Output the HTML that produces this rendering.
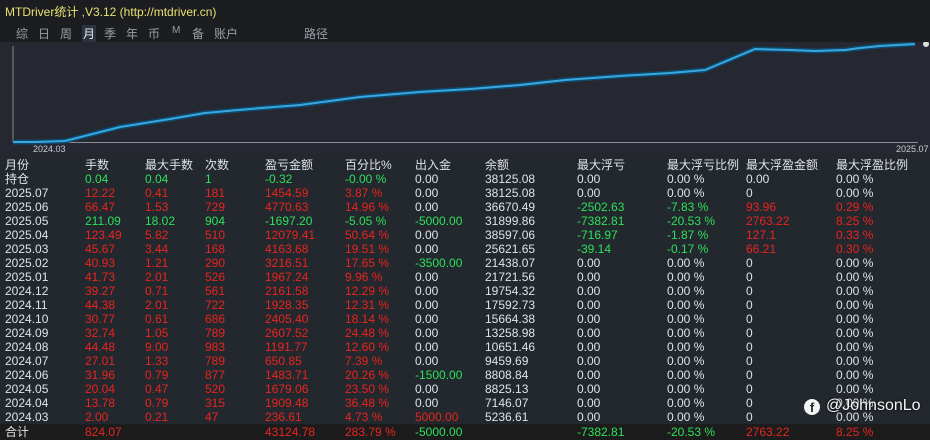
<!DOCTYPE html>
<html><head><meta charset="utf-8"><style>
*{margin:0;padding:0;box-sizing:border-box}
body{width:930px;height:438px;overflow:hidden;background:#23272e;font-family:"Liberation Sans","Noto Sans CJK SC",sans-serif;color:#dfe3ea;position:relative}
.top{position:absolute;left:0;top:0;width:930px;height:42px;background:#1b1d20}
.title{position:absolute;left:5px;top:3px;font-size:12px;color:#e8e070}
.tabs{position:absolute;left:16px;top:25px;font-size:12px;color:#9a9ea6}
.tabs span{position:absolute;top:0;white-space:nowrap}
.chart{position:absolute;left:0;top:42px;width:930px;height:112px;background:#252830}
.ax{position:absolute;font-size:9px;color:#c8ccd2}
.row{position:absolute;left:0;width:930px;height:14px;font-size:12px;line-height:14px;white-space:nowrap}
.row span{position:absolute;top:0}
.r{color:#e8251e}.g{color:#2ee05a}.w{color:#dfe3ea}
.tot{background:#1c1c1d;height:16px}
</style></head><body>
<div class="top">
<div class="title">MTDriver统计 ,V3.12 (http://mtdriver.cn)</div>
<div class="tabs">
<span style="left:0">综</span><span style="left:22px">日</span><span style="left:44px">周</span><span style="left:66px;color:#e6e9ee;background:#2c3340;padding:0 1px">月</span><span style="left:88px">季</span><span style="left:110px">年</span><span style="left:132px">币</span><span style="left:156px;font-size:10px">M</span><span style="left:176px">备</span><span style="left:198px">账户</span><span style="left:288px">路径</span>
</div>
</div>
<div class="chart">
<svg width="930" height="112" style="position:absolute;left:0;top:0">
<line x1="13" y1="4" x2="13" y2="100" stroke="#888" stroke-width="1"/>
<line x1="13" y1="100.5" x2="918" y2="100.5" stroke="#8a8e94" stroke-width="1"/>
<polyline fill="none" stroke="#0e4a6e" stroke-width="5" points="13,100 35,100 65,99 120,85 170,77 205,71 250,67 300,63 360,55 420,50 470,47 520,43 565,38 620,34 670,31 705,28 755,7 790,8 815,9 845,8 860,6 880,4 915,2"/>
<polyline fill="none" stroke="#3aa8e0" stroke-width="2" points="13,100 35,100 65,99 120,85 170,77 205,71 250,67 300,63 360,55 420,50 470,47 520,43 565,38 620,34 670,31 705,28 755,7 790,8 815,9 845,8 860,6 880,4 915,2"/>
<circle cx="926" cy="2" r="3" fill="#ddd"/>
</svg>
<div class="ax" style="left:33px;top:102px">2024.03</div>
<div class="ax" style="left:896px;top:102px">2025.07</div>
</div>

<div class="row w" style="top:158px"><span style="left:5px">月份</span><span style="left:85px">手数</span><span style="left:145px">最大手数</span><span style="left:205px">次数</span><span style="left:265px">盈亏金额</span><span style="left:345px">百分比%</span><span style="left:415px">出入金</span><span style="left:485px">余额</span><span style="left:577px">最大浮亏</span><span style="left:667px">最大浮亏比例</span><span style="left:746px">最大浮盈金额</span><span style="left:836px">最大浮盈比例</span></div>
<div class="row" style="top:172px"><span class="w" style="left:5px">持仓</span><span class="g" style="left:85px">0.04</span><span class="g" style="left:145px">0.04</span><span class="g" style="left:205px">1</span><span class="g" style="left:265px">-0.32</span><span class="g" style="left:345px">-0.00 %</span><span class="w" style="left:415px">0.00</span><span class="w" style="left:485px">38125.08</span><span class="w" style="left:577px">0.00</span><span class="w" style="left:667px">0.00 %</span><span class="w" style="left:746px">0.00</span><span class="w" style="left:836px">0.00 %</span></div>
<div class="row" style="top:186px"><span class="w" style="left:5px">2025.07</span><span class="r" style="left:85px">12.22</span><span class="r" style="left:145px">0.41</span><span class="r" style="left:205px">181</span><span class="r" style="left:265px">1454.59</span><span class="r" style="left:345px">3.87 %</span><span class="w" style="left:415px">0.00</span><span class="w" style="left:485px">38125.08</span><span class="w" style="left:577px">0.00</span><span class="w" style="left:667px">0.00 %</span><span class="w" style="left:746px">0</span><span class="w" style="left:836px">0.00 %</span></div>
<div class="row" style="top:200px"><span class="w" style="left:5px">2025.06</span><span class="r" style="left:85px">66.47</span><span class="r" style="left:145px">1.53</span><span class="r" style="left:205px">729</span><span class="r" style="left:265px">4770.63</span><span class="r" style="left:345px">14.96 %</span><span class="w" style="left:415px">0.00</span><span class="w" style="left:485px">36670.49</span><span class="g" style="left:577px">-2502.63</span><span class="g" style="left:667px">-7.83 %</span><span class="r" style="left:746px">93.96</span><span class="r" style="left:836px">0.29 %</span></div>
<div class="row" style="top:214px"><span class="w" style="left:5px">2025.05</span><span class="g" style="left:85px">211.09</span><span class="g" style="left:145px">18.02</span><span class="g" style="left:205px">904</span><span class="g" style="left:265px">-1697.20</span><span class="g" style="left:345px">-5.05 %</span><span class="g" style="left:415px">-5000.00</span><span class="w" style="left:485px">31899.86</span><span class="g" style="left:577px">-7382.81</span><span class="g" style="left:667px">-20.53 %</span><span class="r" style="left:746px">2763.22</span><span class="r" style="left:836px">8.25 %</span></div>
<div class="row" style="top:228px"><span class="w" style="left:5px">2025.04</span><span class="r" style="left:85px">123.49</span><span class="r" style="left:145px">5.82</span><span class="r" style="left:205px">510</span><span class="r" style="left:265px">12079.41</span><span class="r" style="left:345px">50.64 %</span><span class="w" style="left:415px">0.00</span><span class="w" style="left:485px">38597.06</span><span class="g" style="left:577px">-716.97</span><span class="g" style="left:667px">-1.87 %</span><span class="r" style="left:746px">127.1</span><span class="r" style="left:836px">0.33 %</span></div>
<div class="row" style="top:242px"><span class="w" style="left:5px">2025.03</span><span class="r" style="left:85px">45.67</span><span class="r" style="left:145px">3.44</span><span class="r" style="left:205px">168</span><span class="r" style="left:265px">4163.68</span><span class="r" style="left:345px">19.51 %</span><span class="w" style="left:415px">0.00</span><span class="w" style="left:485px">25621.65</span><span class="g" style="left:577px">-39.14</span><span class="g" style="left:667px">-0.17 %</span><span class="r" style="left:746px">66.21</span><span class="r" style="left:836px">0.30 %</span></div>
<div class="row" style="top:256px"><span class="w" style="left:5px">2025.02</span><span class="r" style="left:85px">40.93</span><span class="r" style="left:145px">1.21</span><span class="r" style="left:205px">290</span><span class="r" style="left:265px">3216.51</span><span class="r" style="left:345px">17.65 %</span><span class="g" style="left:415px">-3500.00</span><span class="w" style="left:485px">21438.07</span><span class="w" style="left:577px">0.00</span><span class="w" style="left:667px">0.00 %</span><span class="w" style="left:746px">0</span><span class="w" style="left:836px">0.00 %</span></div>
<div class="row" style="top:270px"><span class="w" style="left:5px">2025.01</span><span class="r" style="left:85px">41.73</span><span class="r" style="left:145px">2.01</span><span class="r" style="left:205px">526</span><span class="r" style="left:265px">1967.24</span><span class="r" style="left:345px">9.96 %</span><span class="w" style="left:415px">0.00</span><span class="w" style="left:485px">21721.56</span><span class="w" style="left:577px">0.00</span><span class="w" style="left:667px">0.00 %</span><span class="w" style="left:746px">0</span><span class="w" style="left:836px">0.00 %</span></div>
<div class="row" style="top:284px"><span class="w" style="left:5px">2024.12</span><span class="r" style="left:85px">39.27</span><span class="r" style="left:145px">0.71</span><span class="r" style="left:205px">561</span><span class="r" style="left:265px">2161.58</span><span class="r" style="left:345px">12.29 %</span><span class="w" style="left:415px">0.00</span><span class="w" style="left:485px">19754.32</span><span class="w" style="left:577px">0.00</span><span class="w" style="left:667px">0.00 %</span><span class="w" style="left:746px">0</span><span class="w" style="left:836px">0.00 %</span></div>
<div class="row" style="top:298px"><span class="w" style="left:5px">2024.11</span><span class="r" style="left:85px">44.38</span><span class="r" style="left:145px">2.01</span><span class="r" style="left:205px">722</span><span class="r" style="left:265px">1928.35</span><span class="r" style="left:345px">12.31 %</span><span class="w" style="left:415px">0.00</span><span class="w" style="left:485px">17592.73</span><span class="w" style="left:577px">0.00</span><span class="w" style="left:667px">0.00 %</span><span class="w" style="left:746px">0</span><span class="w" style="left:836px">0.00 %</span></div>
<div class="row" style="top:312px"><span class="w" style="left:5px">2024.10</span><span class="r" style="left:85px">30.77</span><span class="r" style="left:145px">0.61</span><span class="r" style="left:205px">686</span><span class="r" style="left:265px">2405.40</span><span class="r" style="left:345px">18.14 %</span><span class="w" style="left:415px">0.00</span><span class="w" style="left:485px">15664.38</span><span class="w" style="left:577px">0.00</span><span class="w" style="left:667px">0.00 %</span><span class="w" style="left:746px">0</span><span class="w" style="left:836px">0.00 %</span></div>
<div class="row" style="top:326px"><span class="w" style="left:5px">2024.09</span><span class="r" style="left:85px">32.74</span><span class="r" style="left:145px">1.05</span><span class="r" style="left:205px">789</span><span class="r" style="left:265px">2607.52</span><span class="r" style="left:345px">24.48 %</span><span class="w" style="left:415px">0.00</span><span class="w" style="left:485px">13258.98</span><span class="w" style="left:577px">0.00</span><span class="w" style="left:667px">0.00 %</span><span class="w" style="left:746px">0</span><span class="w" style="left:836px">0.00 %</span></div>
<div class="row" style="top:340px"><span class="w" style="left:5px">2024.08</span><span class="r" style="left:85px">44.48</span><span class="r" style="left:145px">9.00</span><span class="r" style="left:205px">983</span><span class="r" style="left:265px">1191.77</span><span class="r" style="left:345px">12.60 %</span><span class="w" style="left:415px">0.00</span><span class="w" style="left:485px">10651.46</span><span class="w" style="left:577px">0.00</span><span class="w" style="left:667px">0.00 %</span><span class="w" style="left:746px">0</span><span class="w" style="left:836px">0.00 %</span></div>
<div class="row" style="top:354px"><span class="w" style="left:5px">2024.07</span><span class="r" style="left:85px">27.01</span><span class="r" style="left:145px">1.33</span><span class="r" style="left:205px">789</span><span class="r" style="left:265px">650.85</span><span class="r" style="left:345px">7.39 %</span><span class="w" style="left:415px">0.00</span><span class="w" style="left:485px">9459.69</span><span class="w" style="left:577px">0.00</span><span class="w" style="left:667px">0.00 %</span><span class="w" style="left:746px">0</span><span class="w" style="left:836px">0.00 %</span></div>
<div class="row" style="top:368px"><span class="w" style="left:5px">2024.06</span><span class="r" style="left:85px">31.96</span><span class="r" style="left:145px">0.79</span><span class="r" style="left:205px">877</span><span class="r" style="left:265px">1483.71</span><span class="r" style="left:345px">20.26 %</span><span class="g" style="left:415px">-1500.00</span><span class="w" style="left:485px">8808.84</span><span class="w" style="left:577px">0.00</span><span class="w" style="left:667px">0.00 %</span><span class="w" style="left:746px">0</span><span class="w" style="left:836px">0.00 %</span></div>
<div class="row" style="top:382px"><span class="w" style="left:5px">2024.05</span><span class="r" style="left:85px">20.04</span><span class="r" style="left:145px">0.47</span><span class="r" style="left:205px">520</span><span class="r" style="left:265px">1679.06</span><span class="r" style="left:345px">23.50 %</span><span class="w" style="left:415px">0.00</span><span class="w" style="left:485px">8825.13</span><span class="w" style="left:577px">0.00</span><span class="w" style="left:667px">0.00 %</span><span class="w" style="left:746px">0</span><span class="w" style="left:836px">0.00 %</span></div>
<div class="row" style="top:396px"><span class="w" style="left:5px">2024.04</span><span class="r" style="left:85px">13.78</span><span class="r" style="left:145px">0.79</span><span class="r" style="left:205px">315</span><span class="r" style="left:265px">1909.48</span><span class="r" style="left:345px">36.48 %</span><span class="w" style="left:415px">0.00</span><span class="w" style="left:485px">7146.07</span><span class="w" style="left:577px">0.00</span><span class="w" style="left:667px">0.00 %</span><span class="w" style="left:746px">0</span><span class="w" style="left:836px">0.00 %</span></div>
<div class="row" style="top:410px"><span class="w" style="left:5px">2024.03</span><span class="r" style="left:85px">2.00</span><span class="r" style="left:145px">0.21</span><span class="r" style="left:205px">47</span><span class="r" style="left:265px">236.61</span><span class="r" style="left:345px">4.73 %</span><span class="r" style="left:415px">5000.00</span><span class="w" style="left:485px">5236.61</span><span class="w" style="left:577px">0.00</span><span class="w" style="left:667px">0.00 %</span><span class="w" style="left:746px">0</span><span class="w" style="left:836px">0.00 %</span></div>
<div class="row tot" style="top:424px;line-height:16px"><span class="w" style="left:5px">合计</span><span class="r" style="left:85px">824.07</span><span class="r" style="left:265px">43124.78</span><span class="r" style="left:345px">283.79 %</span><span class="g" style="left:415px">-5000.00</span><span class="g" style="left:577px">-7382.81</span><span class="g" style="left:667px">-20.53 %</span><span class="r" style="left:746px">2763.22</span><span class="r" style="left:836px">8.25 %</span></div>

<div style="position:absolute;left:804px;top:399px;width:16px;height:16px;border-radius:50%;background:#f4f4f4;color:#23272e;font-weight:bold;font-size:13px;line-height:18px;text-align:center">f</div>
<div style="position:absolute;left:826px;top:397px;font-size:16px;color:#f4f4f4;text-shadow:0 0 2px #000">@JohnsonLo</div>
</body></html>
